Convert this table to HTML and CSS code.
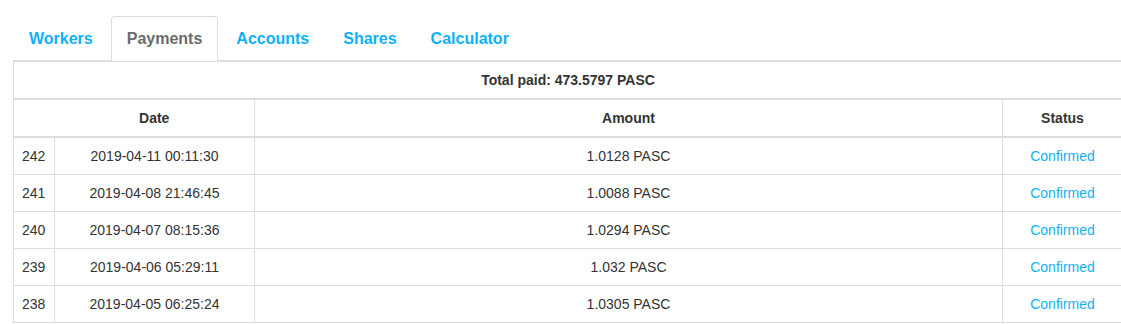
FILE: index.html
```html
<!DOCTYPE html>
<html>
<head>
<meta charset="utf-8">
<link rel="stylesheet" href="styles.css">
</head>
<body>
<div class="page">
  <ul class="tabs">
    <li class="tab"><a href="#">Workers</a></li>
    <li class="tab active"><a href="#">Payments</a></li>
    <li class="tab"><a href="#">Accounts</a></li>
    <li class="tab"><a href="#">Shares</a></li>
    <li class="tab"><a href="#">Calculator</a></li>
  </ul>
  <table class="payments">
    <colgroup>
      <col class="c-id">
      <col class="c-date">
      <col class="c-amount">
      <col class="c-status">
    </colgroup>
    <thead>
      <tr><th colspan="4">Total paid: 473.5797 PASC</th></tr>
      <tr><th class="blank"></th><th class="date-h">Date</th><th>Amount</th><th>Status</th></tr>
    </thead>
    <tbody>
      <tr><td class="id">242</td><td>2019-04-11 00:11:30</td><td>1.0128 PASC</td><td class="status">Confirmed</td></tr>
      <tr><td class="id">241</td><td>2019-04-08 21:46:45</td><td>1.0088 PASC</td><td class="status">Confirmed</td></tr>
      <tr><td class="id">240</td><td>2019-04-07 08:15:36</td><td>1.0294 PASC</td><td class="status">Confirmed</td></tr>
      <tr><td class="id">239</td><td>2019-04-06 05:29:11</td><td>1.032 PASC</td><td class="status">Confirmed</td></tr>
      <tr><td class="id">238</td><td>2019-04-05 06:25:24</td><td>1.0305 PASC</td><td class="status">Confirmed</td></tr>
    </tbody>
  </table>
</div>
</body>
</html>
```
FILE: styles.css
```css
html, body {
  margin: 0;
  padding: 0;
  background: #fff;
  overflow: hidden;
}
body {
  font-family: "Liberation Sans", Arial, sans-serif;
  font-size: 14px;
  line-height: 20px;
  color: #333;
}
.page {
  padding: 16px 0 0 13px;
  width: 1109px;
}
.tabs {
  list-style: none;
  margin: 0;
  padding: 0;
  display: flex;
  border-bottom: 1px solid #ddd;
}
.tab {
  margin-right: 2px;
  margin-bottom: -1px;
}
.tab a {
  display: block;
  padding: 10px 15px;
  font-size: 16px;
  line-height: 23px;
  font-weight: bold;
  color: #0fb1f6;
  text-decoration: none;
  border: 1px solid transparent;
  border-radius: 4px 4px 0 0;
}
.tab.active a {
  color: #6b6b6b;
  background: #fff;
  border-color: #ddd #ddd transparent #ddd;
}
.payments {
  width: 1109px;
  table-layout: fixed;
  border-collapse: collapse;
  border: 1px solid #ddd;
}
.c-id { width: 41px; }
.c-date { width: 200px; }
.c-amount { width: 748px; }
.c-status { width: 120px; }
.payments th,
.payments td {
  border: 1px solid #ddd;
  padding: 8px;
  line-height: 20px;
  text-align: center;
  vertical-align: top;
  white-space: nowrap;
}
.payments thead th {
  border-bottom-width: 2px;
  font-weight: bold;
}
.payments thead th.blank {
  border-right: 0;
}
.payments thead th.date-h {
  border-left: 0;
}
.payments td.id {
  text-align: left;
}
.payments td.status {
  color: #0fb1f6;
}
```
